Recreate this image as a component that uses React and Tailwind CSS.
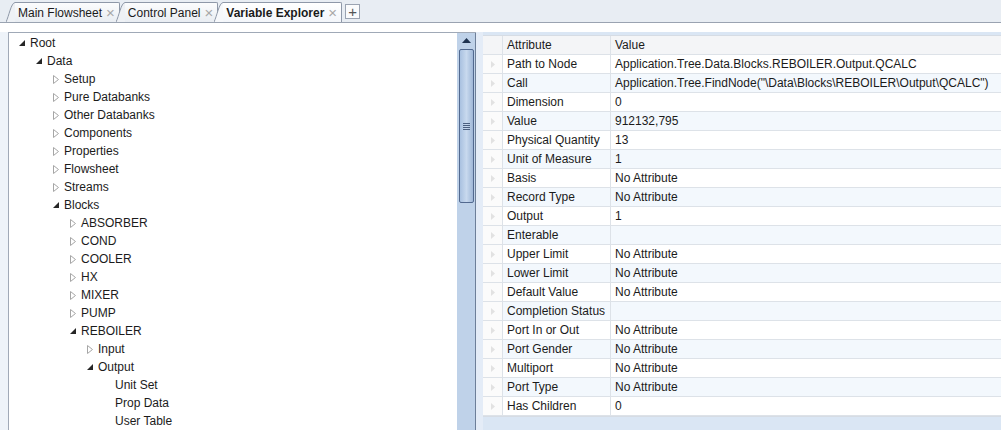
import React from 'react';

const font = { fontFamily: '"Segoe UI", "Liberation Sans", Arial, sans-serif' };

// tree rows: [label, level, state] state: 'open' | 'closed' | 'leaf'
const tree = [
  ['Root', 0, 'open'],
  ['Data', 1, 'open'],
  ['Setup', 2, 'closed'],
  ['Pure Databanks', 2, 'closed'],
  ['Other Databanks', 2, 'closed'],
  ['Components', 2, 'closed'],
  ['Properties', 2, 'closed'],
  ['Flowsheet', 2, 'closed'],
  ['Streams', 2, 'closed'],
  ['Blocks', 2, 'open'],
  ['ABSORBER', 3, 'closed'],
  ['COND', 3, 'closed'],
  ['COOLER', 3, 'closed'],
  ['HX', 3, 'closed'],
  ['MIXER', 3, 'closed'],
  ['PUMP', 3, 'closed'],
  ['REBOILER', 3, 'open'],
  ['Input', 4, 'closed'],
  ['Output', 4, 'open'],
  ['Unit Set', 5, 'leaf'],
  ['Prop Data', 5, 'leaf'],
  ['User Table', 5, 'leaf'],
];

const rows = [
  ['Path to Node', 'Application.Tree.Data.Blocks.REBOILER.Output.QCALC'],
  ['Call', 'Application.Tree.FindNode("\\Data\\Blocks\\REBOILER\\Output\\QCALC")'],
  ['Dimension', '0'],
  ['Value', '912132,795'],
  ['Physical Quantity', '13'],
  ['Unit of Measure', '1'],
  ['Basis', 'No Attribute'],
  ['Record Type', 'No Attribute'],
  ['Output', '1'],
  ['Enterable', ''],
  ['Upper Limit', 'No Attribute'],
  ['Lower Limit', 'No Attribute'],
  ['Default Value', 'No Attribute'],
  ['Completion Status', ''],
  ['Port In or Out', 'No Attribute'],
  ['Port Gender', 'No Attribute'],
  ['Multiport', 'No Attribute'],
  ['Port Type', 'No Attribute'],
  ['Has Children', '0'],
];

function Arrow({ state }) {
  if (state === 'open') {
    return (
      <svg width="8" height="8" viewBox="0 0 8 8">
        <polygon points="7,1 7,7 1,7" fill="#262626" />
      </svg>
    );
  }
  if (state === 'closed') {
    return (
      <svg width="8" height="9" viewBox="0 0 8 9">
        <polygon points="1.5,0.5 6.5,4.5 1.5,8.5" fill="none" stroke="#a6a6a6" />
      </svg>
    );
  }
  return <span className="w-2" />;
}

function Tab({ label, active }) {
  return (
    <div className="flex items-end h-[20px] -ml-[4px] first:ml-0">
      <svg width="9" height="20" viewBox="0 0 9 20" className="block">
        <path d="M0,20 C3,14 5,1 9,0.5 L9,20 Z" fill={active ? '#f6f8fb' : '#eef1f5'} />
        <path d="M0,20 C3,14 5,1 9,0.5" fill="none" stroke="#8e98a8" />
      </svg>
      <div
        className={
          'flex items-center h-[20px] pl-[3px] pr-[4px] border-t border-r border-[#8e98a8] rounded-tr-[2px] ' +
          (active ? 'bg-gradient-to-b from-white to-[#f3f6fa] font-bold' : 'bg-gradient-to-b from-[#fbfcfd] to-[#e9edf2]')
        }
      >
        <span className="text-[12px] text-[#1b1b1b] leading-none">{label}</span>
        <span className="ml-[4px] text-[15px] text-[#a8a8a8] font-normal leading-none">×</span>
      </div>
    </div>
  );
}

export default function App() {
  return (
    <div className="w-[1001px] h-[430px] overflow-hidden bg-[#e9eff7] flex flex-col" style={font}>
      {/* tab strip */}
      <div className="h-[23px] flex items-end pl-[6px] bg-[#e8edf3] border-b border-[#9aa3b1]">
        <Tab label="Main Flowsheet" />
        <Tab label="Control Panel" />
        <Tab label="Variable Explorer" active />
        <div className="ml-[3px] mb-[3px] w-[15px] h-[15px] border border-[#9aa3b1] bg-[#fafbfc] flex items-center justify-center text-[15px] leading-none text-[#555]">
          +
        </div>
      </div>
      <div className="h-[9px] bg-white" />

      <div className="flex flex-1 min-h-0">
        {/* tree panel */}
        <div className="w-[8px] bg-[#eef3f9]" />
        <div className="flex flex-1 min-h-0 w-[468px] border-t border-l border-[#a0a9b7] bg-white">
          <div className="flex-1 pt-[1px]">
            {tree.map(([label, level, state]) => (
              <div
                key={label}
                className="h-[18px] flex items-center text-[12px] text-[#1b1b1b]"
                style={{ paddingLeft: 9 + level * 17 }}
              >
                <span className="w-[8px] flex items-center justify-center">
                  <Arrow state={state} />
                </span>
                <span className="ml-[4px]">{label}</span>
              </div>
            ))}
          </div>
          {/* scrollbar */}
          <div className="w-[18px] bg-[#bfd2e9] flex flex-col items-center">
            <div className="h-[15px] flex items-center justify-center">
              <svg width="9" height="5" viewBox="0 0 9 5">
                <polygon points="0,5 4.5,0 9,5" fill="#1f3350" />
              </svg>
            </div>
            <div className="mt-[1px] h-[154px] w-[15px] rounded-[2px] border border-[#52698f] bg-gradient-to-r from-[#a9c1e0] via-[#c8d9ee] to-[#9fb7d8] flex items-center justify-center">
              <div className="flex flex-col gap-[1px]">
                <div className="w-[7px] h-px bg-[#4b5f80]" />
                <div className="w-[7px] h-px bg-[#4b5f80]" />
                <div className="w-[7px] h-px bg-[#4b5f80]" />
                <div className="w-[7px] h-px bg-[#4b5f80]" />
              </div>
            </div>
          </div>
          <div className="w-[1px] bg-[#6d7f99]" />
        </div>

        {/* property grid */}
        <div className="w-[525px] bg-[#dae6f4] flex">
          <div className="w-[7px] bg-[#e4ecf7]" />
          <div className="flex-1 flex flex-col">
            <div className="w-full mt-[3px] bg-white border-t border-[#d6dce4] border-b">
              <div className="flex h-[19px] bg-[#f4f5f7] border-b border-[#dde2e8] text-[12px] text-[#1b1b1b]">
                <div className="w-[20px] border-r border-[#dde2e8]" />
                <div className="w-[108px] pl-[4px] flex items-center border-r border-[#dde2e8]">Attribute</div>
                <div className="flex-1 pl-[4px] flex items-center">Value</div>
              </div>
              {rows.map(([attr, val], i) => (
                <div
                  key={attr}
                  className={
                    'flex h-[19px] border-b border-[#dde2e8] text-[12px] text-[#1b1b1b] ' +
                    (i % 2 ? 'bg-[#f3f8fd]' : 'bg-white')
                  }
                >
                  <div className="w-[20px] border-r border-[#dde2e8] bg-[#fbfbfb] flex items-center justify-center">
                    <svg width="4" height="7" viewBox="0 0 4 7">
                      <polygon points="0,0 4,3.5 0,7" fill="#e2e2e2" />
                    </svg>
                  </div>
                  <div className="w-[108px] pl-[4px] flex items-center border-r border-[#dde2e8] whitespace-nowrap">{attr}</div>
                  <div className="flex-1 pl-[4px] flex items-center whitespace-nowrap">{val}</div>
                </div>
              ))}
            </div>
          </div>
        </div>
      </div>
    </div>
  );
}
